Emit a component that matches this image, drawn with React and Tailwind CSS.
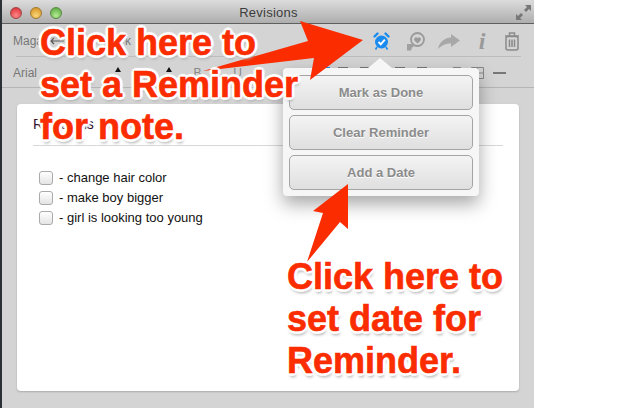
const sans = 'font-["Liberation_Sans",Arial,sans-serif]';

function Note({ children }) {
  return (
    <div className={`absolute font-bold text-[36px] leading-[42px] text-[#fb2c00] whitespace-pre ${sans} [-webkit-text-stroke:0.6px_#fb2c00] [text-shadow:3px_0_1px_#fff,-3px_0_1px_#fff,0_3px_1px_#fff,0_-3px_1px_#fff,2px_2px_1px_#fff,-2px_2px_1px_#fff,2px_-2px_1px_#fff,-2px_-2px_1px_#fff,1px_4px_3px_#aaa]`}>
      {children}
    </div>
  );
}

function PopButton({ children }) {
  return (
    <button className="h-[35px] w-full rounded-[5px] border border-[#a4a4a4] bg-gradient-to-b from-[#f4f4f4] to-[#dfdfdf] text-[13px] font-bold text-[#8b8b8b] [text-shadow:0_1px_0_#fff]">
      {children}
    </button>
  );
}

const items = ['- change hair color', '- make boy bigger', '- girl is looking too young'];

export default function App() {
  return (
    <div className={`relative w-[618px] h-[408px] overflow-hidden bg-white ${sans}`}>
      <div className="flex h-full w-[534px]">
        <div className="w-[2px] bg-[#2b3036]" />
        <div className="flex flex-1 flex-col bg-[#d4d4d4]">
          {/* title bar */}
          <div className="relative flex h-[24px] items-center justify-center rounded-t-[5px] border-b border-[#5f5f5f] bg-gradient-to-b from-[#dcdcdc] to-[#aeaeae]">
            <div className="absolute left-[8px] top-[7px] flex gap-[8px]">
              <span className="size-[12px] rounded-full border border-[#9a4a4a] bg-[radial-gradient(circle_at_50%_75%,#f88,#d8262c)]" />
              <span className="size-[12px] rounded-full border border-[#a07a30] bg-[radial-gradient(circle_at_50%_75%,#fbd77a,#d08a18)]" />
              <span className="size-[12px] rounded-full border border-[#5a8a45] bg-[radial-gradient(circle_at_50%_75%,#b4ec94,#4f9f35)]" />
            </div>
            <span className="pl-[1px] pt-[2px] text-[13px] tracking-[0.25px] text-[#3c3c3c]">Revisions</span>
            <svg className="absolute right-[3px] top-[5px]" width="15" height="15" viewBox="0 0 15 15" fill="#777">
              <path d="M15 0v6l-2-2-3 3-2-2 3-3-2-2zM0 15V9l2 2 3-3 2 2-3 3 2 2z" />
            </svg>
          </div>

          {/* toolbar rows */}
          <div className="ml-[14px] mr-[13px] flex h-[33px] items-center border-b border-[#bdbdbd] pt-[2px] pr-[1px] text-[12px] text-[#777]">
            <span className="-ml-[3px] w-[23px]">Maga</span>
            <svg className="ml-[14px]" width="14" height="8" viewBox="0 0 14 8" fill="none" stroke="#555" strokeWidth="1.200">
              <path d="M14 4H1M4 1L1 4l3 3" />
            </svg>
            <span className="ml-[61px]">k</span>
            <div className="ml-auto flex items-center">
              <svg width="17" height="18" viewBox="0 0 17 18">
                <path d="M1.500 4.500l3-3M15.500 4.500l-3-3" stroke="#1a8bef" strokeWidth="2.400" strokeLinecap="round" />
                <path d="M4 15l-1.500 2.500M13 15l1.500 2.500" stroke="#1a8bef" strokeWidth="1.600" />
                <circle cx="8.500" cy="10" r="6.500" fill="#1a8bef" />
                <path d="M5.500 10l2.300 2.300 4-4.600" fill="none" stroke="#fff" strokeWidth="2" />
              </svg>
              <svg className="ml-[16px]" width="19" height="19" viewBox="0 0 19 19">
                <circle cx="11.500" cy="7.500" r="6.500" fill="none" stroke="#9a9a9a" strokeWidth="1.800" />
                <path d="M11.500 11.500l-3-3a1.800 1.800 0 0 1 3-2.300 1.800 1.800 0 0 1 3 2.300z" fill="#9a9a9a" />
                <path d="M1 12h5l2 2.500-2 1-1 3H1z" fill="#a0a0a0" />
              </svg>
              <svg className="ml-[13px]" width="22" height="15" viewBox="0 0 22 15">
                <path d="M13 0l9 6.500-9 6.500V9.500C8 9.500 4 11 0 15 1 8.500 6 4 13 3.500z" fill="#a8a8a8" />
              </svg>
              <span className={`ml-[18px] w-[8px] text-center font-["Liberation_Serif",serif] text-[24px] leading-none font-bold italic text-[#9a9a9a]`}>i</span>
              <svg className="ml-[18px]" width="16" height="19" viewBox="0 0 16 19" fill="none" stroke="#8a8a8a" strokeWidth="1.500">
                <path d="M1 4h14M5.500 3.500V1h5v2.500" />
                <rect x="2" y="4.500" width="12" height="13.500" rx="2" />
                <path d="M5.500 7.500v7.500M8 7.500v7.500M10.500 7.500v7.500" />
              </svg>
            </div>
          </div>
          <div className="flex h-[31px] items-center border-b border-[#b5b5b5] pt-[1px] pl-[11px] text-[12px] text-[#777]">
            <span className="w-[24px]">Arial</span>
            <span className="ml-[78px] -mt-[6px] size-0 border-x-[3px] border-b-[5px] border-x-transparent border-b-[#111]" />
            <span className="ml-[45px] -mt-[6px] size-0 border-x-[3px] border-b-[5px] border-x-transparent border-b-[#111]" />
            <span className="ml-[21px] w-[9px] text-center text-[#888]">B</span>
            <span className="ml-[31px] w-[9px] text-center text-[#888]">U</span>
            <span className="ml-[84px] h-[11px] w-[4px] bg-[#1a8bef]" />
            <span className="ml-[8px] h-[11px] w-[10px] border-t border-[#777]" />
            <span className="ml-[12px] h-[11px] w-[10px] border-t border-[#777]" />
            <span className="ml-[25px] h-[11px] w-[10px] border-t border-[#777]" />
            <span className="ml-[12px] h-[11px] w-[10px] border-t border-[#777]" />
            <span className="ml-[25px] h-[11px] w-[10px] rounded-[2px] border border-[#888]" />
            <svg className="ml-[9px]" width="13" height="12" viewBox="0 0 13 12" fill="none" stroke="#888">
              <path d="M.5.500h12v11H.500zM6.500.500v11M.5 6h12" />
            </svg>
            <span className="ml-[9px] h-[2px] w-[13px] bg-[#777]" />
          </div>

          {/* note card */}
          <div className="mx-[15px] mt-[16px] h-[287px] rounded-[4px] bg-white px-[16px] shadow-[0_1px_2px_#aaa]">
            <div className="flex h-[42px] items-center border-b border-[#d8d8d8] text-[14px] text-[#301030]">Revisions</div>
            <div className="mt-[24px] flex flex-col gap-[5px] pl-[6px]">
              {items.map((item) => (
                <label key={item} className="flex h-[15px] items-center gap-[6px] text-[13px] text-[#111]">
                  <span className="size-[14px] rounded-[3px] border border-[#aaa] bg-gradient-to-b from-white to-[#e4e4e4]" />
                  {item}
                </label>
              ))}
            </div>
          </div>
        </div>
      </div>

      {/* reminder popover */}
      <div className="absolute left-[283px] top-[68px] flex h-[128px] w-[196px] flex-col gap-[5px] rounded-[4px] bg-[#f6f6f6] px-[6px] pt-[7px] shadow-[0_8px_18px_rgba(0,0,0,0.35)]">
        <div className="absolute left-[85px] top-[-10px] size-0 border-x-[12px] border-b-[10px] border-x-transparent border-b-[#f6f6f6]" />
        <PopButton>Mark as Done</PopButton>
        <PopButton>Clear Reminder</PopButton>
        <PopButton>Add a Date</PopButton>
      </div>

      {/* arrows */}
      <svg className="absolute left-0 top-0" width="618" height="408" fill="#fb2c00">
        <path d="M203 71L308 41 300 21 363 40 310 80 314 58z" />
        <path d="M348 184L348 229 340 222 307 262 323 213 313 211z" />
      </svg>

      <div className="absolute left-[40px] top-[22px]">
        <Note>{'Click here to\nset a Reminder\nfor note.'}</Note>
      </div>
      <div className="absolute left-[287px] top-[256px]">
        <Note>{'Click here to\nset date for\nReminder.'}</Note>
      </div>
    </div>
  );
}
